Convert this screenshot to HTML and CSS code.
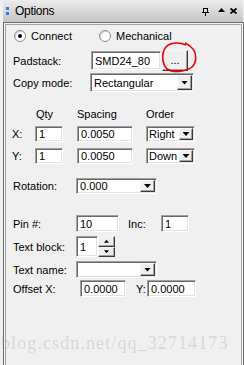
FILE: index.html
```html
<!DOCTYPE html>
<html>
<head>
<meta charset="utf-8">
<title>Options</title>
<link rel="stylesheet" href="styles.css">
</head>
<body>

<div class="titlebar">
  <span class="grip"><i></i><i></i></span>
  <span class="title">Options</span>
  <span class="tools">
    <svg class="ico-pin" width="7" height="8" viewBox="0 0 7 8"><rect x="1.5" y="0.5" width="4" height="4" fill="none" stroke="#000"/><rect x="0" y="4" width="7" height="1" fill="#000"/><rect x="3" y="5" width="1" height="3" fill="#000"/></svg>
    <svg class="ico-up" width="7" height="4" viewBox="0 0 7 4"><polygon points="0,4 7,4 3.5,0" fill="#000"/></svg>
    <svg class="ico-x" width="7" height="6" viewBox="0 0 7 6"><path d="M0.5 0.5 L6.5 5.5 M6.5 0.5 L0.5 5.5" stroke="#000" stroke-width="1.8"/></svg>
  </span>
</div>

<div class="panel">
  <div class="row radios">
    <span class="radio on"></span><span class="rlabel">Connect</span>
    <span class="radio mech"></span><span class="rlabel">Mechanical</span>
  </div>

  <div class="row r-pad">
    <span class="lbl" style="width:78px">Padstack:</span>
    <span class="field txt w70">SMD24_80</span>
    <span class="raised dots">...</span>
  </div>

  <div class="row r-copy">
    <span class="lbl" style="width:77px">Copy mode:</span>
    <span class="field combo w104"><span class="val">Rectangular</span><span class="raised arrow"></span></span>
  </div>

  <div class="grid heads">
    <span></span>
    <span class="h-qty">Qty</span>
    <span>Spacing</span>
    <span>Order</span>
  </div>
  <div class="grid r-x">
    <span>X:</span>
    <span><span class="field txt w28">1</span></span>
    <span><span class="field txt w56">0.0050</span></span>
    <span><span class="field combo w49 tight"><span class="val">Right</span><span class="raised arrow"></span></span></span>
  </div>
  <div class="grid r-y">
    <span>Y:</span>
    <span><span class="field txt w28">1</span></span>
    <span><span class="field txt w56">0.0050</span></span>
    <span><span class="field combo w49 tight"><span class="val">Down</span><span class="raised arrow"></span></span></span>
  </div>

  <div class="row r-rot">
    <span class="lbl" style="width:63px">Rotation:</span>
    <span class="field combo w81"><span class="val">0.000</span><span class="raised arrow"></span></span>
  </div>

  <div class="row r-pin">
    <span class="lbl" style="width:63px">Pin #:</span>
    <span class="field txt w43">10</span>
    <span class="lbl inc">Inc:</span>
    <span class="field txt w28">1</span>
  </div>

  <div class="row r-block">
    <span class="lbl" style="width:63px">Text block:</span>
    <span class="field txt w22">1</span>
    <span class="spin"><span class="raised s-up"></span><span class="raised s-down"></span></span>
  </div>

  <div class="row r-name">
    <span class="lbl" style="width:63px">Text name:</span>
    <span class="field combo w81"><span class="val"></span><span class="raised arrow"></span></span>
  </div>

  <div class="row r-off">
    <span class="lbl" style="width:67px">Offset X:</span>
    <span class="field txt w46">0.0000</span>
    <span class="lbl offy">Y:</span>
    <span class="field txt w49">0.0000</span>
  </div>
</div>

<svg class="scribble" width="244" height="365" viewBox="0 0 244 365">
  <path d="M186 45 C180 42 170 42 166 47 C161 53 162 64 167 69 C173 73 186 72 192 67 C198 61 196 51 191 47 C189 45 187 44 185 43" fill="none" stroke="#f00000" stroke-width="1.6"/>
</svg>

<div class="watermark">blog.csdn.net/qq_32714173</div>

</body>
</html>
```

FILE: styles.css
```css
* {
   box-sizing: border-box;
}

body {
   margin: 0;
   width: 244px;
   height: 365px;
   overflow: hidden;
   position: relative;
   background-color: #f0f0f0;
   font-family: "Liberation Sans", Arial, sans-serif;
   font-size: 11px;
   color: #000;
}

/* title bar */

.titlebar {
   height: 22px;
   margin-left: 3px;
   margin-right: 1px;
   padding-left: 3px;
   padding-right: 6px;
   display: flex;
   align-items: center;
   background: linear-gradient(#ededed, #c4c4c4);
}

.grip {
   display: flex;
   flex-direction: column;
   gap: 2px;
   width: 3px;
   margin-right: 6px;
}

.grip i {
   display: block;
   width: 3px;
   height: 3px;
   background-color: #2f7fe6;
}

.title {
   font-size: 12px;
   letter-spacing: -0.3px;
}

.tools {
   margin-left: auto;
   display: flex;
   align-items: center;
}

.ico-pin { margin-top: 2px; }
.ico-up { margin-left: 9px; margin-top: -2px; }
.ico-x { margin-left: 5px; margin-top: -1px; }

/* panel */

.panel {
   margin-left: 3px;
   height: 360px;
   border: 1px solid #6b6b6b;
   border-bottom: none;
   box-shadow: inset 0 0 0 1px #f4f4f4, inset 0 0 0 2px #a4a4a4;
}

.row {
   display: flex;
   align-items: center;
   padding-left: 9px;
}

.lbl {
   flex: none;
}

.radios {
   margin-top: 6px;
   height: 13px;
   padding-left: 10px;
}

.radio {
   width: 12px;
   height: 12px;
   border-radius: 50%;
   background-color: #fff;
   border: 1px solid #8e8e8e;
   box-shadow: inset 1px 1px 0 #d2d2d2;
   display: flex;
   align-items: center;
   justify-content: center;
}

.radio.on::after {
   content: "";
   width: 4px;
   height: 4px;
   border-radius: 50%;
   background-color: #000;
}

.rlabel {
   margin-left: 5px;
}

.radio.mech {
   margin-left: 27px;
}

.r-pad { margin-top: 8px; height: 21px; }
.r-copy { margin-top: 2px; height: 19px; }
.r-rot { margin-top: 14px; height: 16px; }
.r-pin { margin-top: 21px; height: 17px; }
.r-block { margin-top: 4px; height: 21px; }
.r-name { margin-top: 4px; height: 17px; }
.r-off { margin-top: 2px; height: 17px; }

.inc { margin-left: 9px; width: 33px; }
.offy { margin-left: 10px; width: 11px; }

/* X / Y grid */

.grid {
   display: grid;
   grid-template-columns: 23px 42px 69px 49px;
   align-items: center;
   padding-left: 8px;
}

.heads { margin-top: 16px; height: 12px; }
.h-qty { padding-left: 1px; }
.r-x { margin-top: 6px; height: 16px; }
.r-y { margin-top: 6px; height: 16px; }

.grid > span { display: flex; align-items: center; height: 100%; }

/* controls */

.field {
   background-color: #fff;
   border: 1px solid;
   border-color: #a0a0a0 #fff #fff #a0a0a0;
   padding: 1px;
   box-shadow: inset 1px 1px 0 #696969, inset -1px -1px 0 #e3e3e3;
   height: 100%;
   display: flex;
   align-items: stretch;
   flex: none;
}

.field.txt {
   padding-left: 3px;
   align-items: center;
}

.r-pad .field { height: 19px; }

.w22 { width: 22px; }
.w28 { width: 28px; }
.w43 { width: 43px; }
.w46 { width: 46px; }
.w49 { width: 49px; }
.w56 { width: 56px; }
.w70 { width: 70px; }
.w81 { width: 81px; }
.w104 { width: 104px; }

.combo .val {
   flex: 1;
   min-width: 0;
   padding-left: 2px;
   display: flex;
   align-items: center;
   overflow: hidden;
   white-space: nowrap;
}

.combo.tight .val {
   padding-left: 1px;
}

.raised {
   background-color: #f0f0f0;
   border: 1px solid;
   border-color: #f8f8f8 #3c3c3c #3c3c3c #f8f8f8;
   box-shadow: inset -1px -1px 0 #a0a0a0;
}

.arrow {
   width: 15px;
   flex: none;
   display: flex;
   align-items: center;
   justify-content: center;
}

.combo.tight .arrow {
   width: 14px;
}

.arrow::after {
   content: "";
   width: 7px;
   height: 4px;
   background-color: #000;
   clip-path: polygon(0 0, 100% 0, 50% 100%);
}

.dots {
   width: 26px;
   height: 21px;
   margin-left: 1px;
   display: flex;
   align-items: center;
   justify-content: center;
   padding-bottom: 2px;
}

.spin {
   width: 17px;
   height: 21px;
   display: flex;
   flex-direction: column;
}

.spin .raised {
   flex: 1;
   display: flex;
   align-items: center;
   justify-content: center;
}

.s-up::after,
.s-down::after {
   content: "";
   width: 5px;
   height: 3px;
   background-color: #000;
}

.s-up::after { clip-path: polygon(50% 0, 100% 100%, 0 100%); }
.s-down::after { clip-path: polygon(0 0, 100% 0, 50% 100%); }

/* overlays */

.scribble {
   position: absolute;
   left: 0;
   top: 0;
   pointer-events: none;
}

.watermark {
   position: absolute;
   left: 1px;
   top: 333px;
   font-family: "Liberation Serif", serif;
   font-size: 18px;
   line-height: 20px;
   letter-spacing: 1.1px;
   color: rgba(150, 150, 150, 0.28);
   white-space: nowrap;
}
```
